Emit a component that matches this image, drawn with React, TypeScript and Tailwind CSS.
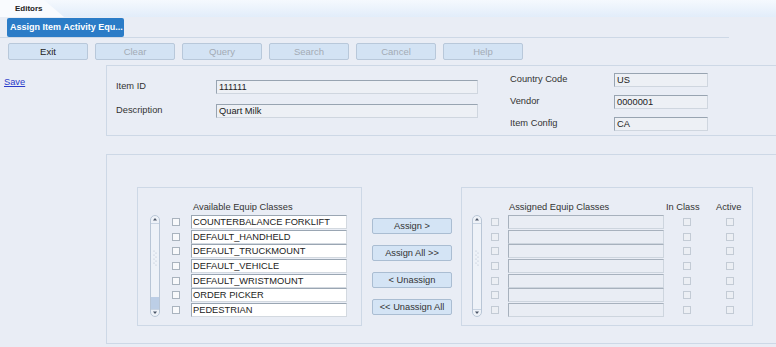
import React from "react";

const available = [
    "COUNTERBALANCE FORKLIFT",
    "DEFAULT_HANDHELD",
    "DEFAULT_TRUCKMOUNT",
    "DEFAULT_VEHICLE",
    "DEFAULT_WRISTMOUNT",
    "ORDER PICKER",
    "PEDESTRIAN",
];

const toolbar = ["Exit", "Clear", "Query", "Search", "Cancel", "Help"];

function ScrollTrack({ thumb }: { thumb?: boolean }) {
    return (
        <svg width="10" height="102" viewBox="0 0 10 102" className="shrink-0">
            <rect x="0.5" y="0.5" width="9" height="101" rx="4.5" fill="#eef2f8" stroke="#b9c6d6" />
            <line x1="1" y1="8.5" x2="9" y2="8.5" stroke="#c9d4e2" />
            <path d="M3 5.5 L5 3 L7 5.5 Z" fill="#4a5566" />
            {thumb && <rect x="1" y="82" width="8" height="12" fill="#bccee6" />}
            <line x1="1" y1="94.5" x2="9" y2="94.5" stroke="#c9d4e2" />
            <path d="M3 96.5 L5 99 L7 96.5 Z" fill="#4a5566" />
            {[36, 40, 44, 48].map((y) => (
                <g key={y} fill="#b4c0ce">
                    <circle cx="4" cy={y} r="0.6" />
                    <circle cx="6" cy={y + 2} r="0.6" />
                </g>
            ))}
        </svg>
    );
}

function Field({ value, width }: { value: string; width: string }) {
    return (
        <div
            className={`${width} h-[14px] bg-[#edf0f5] border border-t-[#98a4b1] border-l-[#98a4b1] border-r-[#cfd6df] border-b-[#cfd6df] pl-[2px] text-[9.3px] leading-[12px] text-[#222]`}
        >
            {value}
        </div>
    );
}

export default function App() {
    return (
        <div className="w-[776px] h-[347px] overflow-hidden bg-[#e9edf5] font-['Liberation_Sans',Arial,sans-serif] text-[#333]">
            {/* editor strip */}
            <div className="h-[17px] bg-gradient-to-b from-[#f5f9fe] to-[#e2edfa]">
                <div className="h-full w-[64px] bg-[#f9fbfe] [clip-path:polygon(0_0,44px_0,64px_100%,0_100%)] pl-[15px] text-[8px] leading-[17px] font-bold text-[#222]">
                    Editors
                </div>
            </div>

            {/* title tab */}
            <div className="h-[21px] w-[729px] border-b border-[#cdd8e6] pl-[7px] pt-[1px]">
                <div className="h-[19px] w-[117px] bg-[#2b7cc7] rounded-[2px] pl-[3px] text-[9px] leading-[19px] font-bold text-white">
                    Assign Item Activity Equ...
                </div>
            </div>

            {/* toolbar */}
            <div className="h-[27px] flex gap-[7px] pl-[8px] pt-[5px]">
                {toolbar.map((b) => (
                    <button
                        key={b}
                        className={`w-[80px] h-[17px] bg-[#d3e3f4] border border-[#b8c8da] rounded-[2px] text-[9.5px] leading-[15px] ${
                            b === "Exit" ? "text-[#222]" : "text-[#a3abb4]"
                        }`}
                    >
                        {b}
                    </button>
                ))}
            </div>

            <div className="flex">
                <div className="w-[106px] pl-[4px] pt-[11px] text-[9.3px] leading-[12px]">
                    <a className="text-[#2a3bc9] underline cursor-pointer">Save</a>
                </div>

                <div className="flex-1 flex flex-col">
                    {/* header panel */}
                    <div className="h-[71px] border-t border-l border-b border-[#cdd8e6] flex">
                        <div className="ml-[9px] mt-[14px] flex flex-col gap-[10px]">
                            <div className="flex items-center h-[14px]">
                                <span className="w-[100px] text-[9.3px]">Item ID</span>
                                <Field value="111111" width="w-[262px]" />
                            </div>
                            <div className="flex items-center h-[14px]">
                                <span className="w-[100px] text-[9.3px]">Description</span>
                                <Field value="Quart Milk" width="w-[262px]" />
                            </div>
                        </div>
                        <div className="ml-[32px] mt-[7px] flex flex-col gap-[8px]">
                            <div className="flex items-center h-[14px]">
                                <span className="w-[104px] text-[9.3px]">Country Code</span>
                                <Field value="US" width="w-[94px]" />
                            </div>
                            <div className="flex items-center h-[14px]">
                                <span className="w-[104px] text-[9.3px]">Vendor</span>
                                <Field value="0000001" width="w-[94px]" />
                            </div>
                            <div className="flex items-center h-[14px]">
                                <span className="w-[104px] text-[9.3px]">Item Config</span>
                                <Field value="CA" width="w-[94px]" />
                            </div>
                        </div>
                    </div>

                    {/* assignment panel */}
                    <div className="mt-[18px] h-[190px] border-t border-l border-b border-[#cdd8e6] flex items-start pl-[30px] pt-[32px]">
                        {/* available */}
                        <div className="w-[225px] h-[139px] border border-[#cdd8e6]">
                            <div className="h-[27px] pt-[13px] pl-[55px] text-[9.3px] leading-[12px]">
                                Available Equip Classes
                            </div>
                            <div className="flex ml-[12px]">
                                <ScrollTrack thumb />
                                <div className="ml-[12px] flex flex-col">
                                    {available.map((name) => (
                                        <div key={name} className="h-[14.67px] flex items-start">
                                            <span className="mt-[3px] w-[8px] h-[8px] border border-[#a9b3be] bg-[#f8f9fb]" />
                                            <div className="ml-[11px] w-[156px] h-[14px] bg-white border border-t-[#9aa6b3] border-l-[#9aa6b3] border-r-[#d3d9e0] border-b-[#d3d9e0] pl-[1px] text-[9.3px] leading-[12px] text-[#222]">
                                                {name}
                                            </div>
                                        </div>
                                    ))}
                                </div>
                            </div>
                        </div>

                        {/* transfer buttons */}
                        <div className="ml-[10px] mt-[31px] flex flex-col gap-[11px]">
                            {["Assign >", "Assign All >>", "< Unassign", "<< Unassign All"].map((b) => (
                                <button
                                    key={b}
                                    className="w-[80px] h-[16px] bg-[#d4e4f5] border border-[#aabdd2] rounded-[2px] text-[9.3px] leading-[14px] text-[#333]"
                                >
                                    {b}
                                </button>
                            ))}
                        </div>

                        {/* assigned */}
                        <div className="ml-[9px] w-[292px] h-[139px] border border-[#cdd8e6]">
                            <div className="h-[27px] pt-[13px] flex text-[9.3px] leading-[12px]">
                                <span className="ml-[47px] w-[157px]">Assigned Equip Classes</span>
                                <span className="w-[50px]">In Class</span>
                                <span>Active</span>
                            </div>
                            <div className="flex ml-[10px]">
                                <ScrollTrack />
                                <div className="ml-[9px] flex flex-col">
                                    {available.map((name) => (
                                        <div key={name} className="h-[14.67px] flex items-start">
                                            <span className="mt-[3px] w-[8px] h-[8px] border border-[#c3cbd5] bg-[#eceff4]" />
                                            <div className="ml-[9px] w-[156px] h-[14px] bg-[#e9edf4] border border-t-[#a7b1bd] border-l-[#a7b1bd] border-r-[#cdd5de] border-b-[#cdd5de]" />
                                            <span className="mt-[3px] ml-[19px] w-[8px] h-[8px] border border-[#c3cbd5] bg-[#eceff4]" />
                                            <span className="mt-[3px] ml-[35px] w-[8px] h-[8px] border border-[#c3cbd5] bg-[#eceff4]" />
                                        </div>
                                    ))}
                                </div>
                            </div>
                        </div>
                    </div>
                </div>
            </div>
        </div>
    );
}
